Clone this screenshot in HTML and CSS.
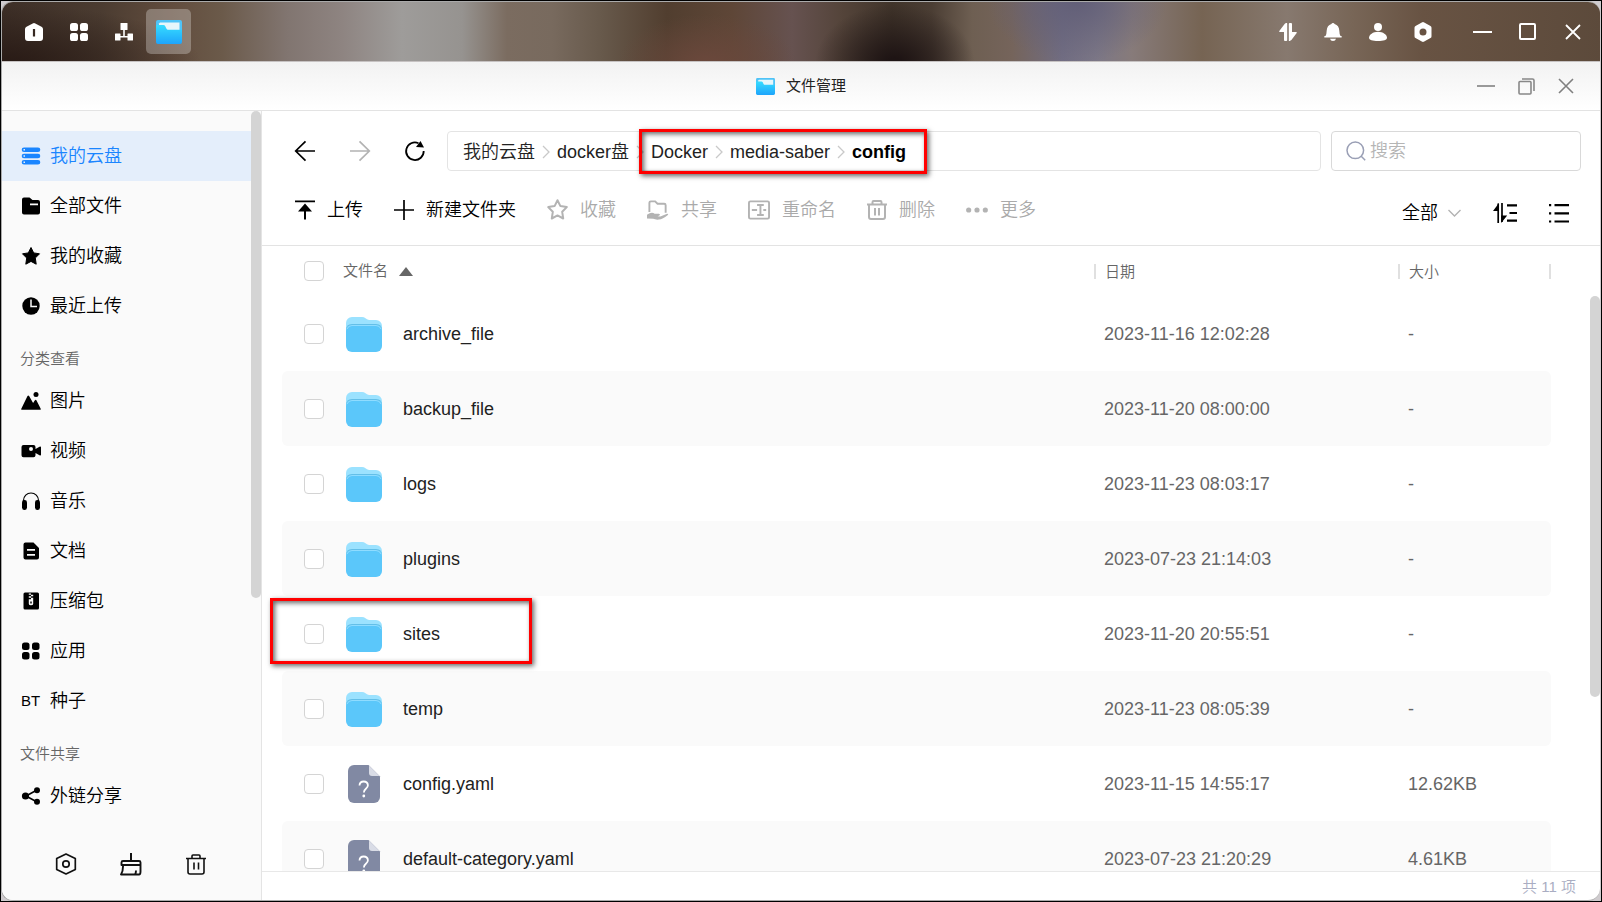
FILE: index.html
```html
<!DOCTYPE html>
<html lang="zh-CN">
<head>
<meta charset="utf-8">
<title>文件管理</title>
<link rel="stylesheet" href="styles.css">
</head>
<body>
<svg class="sprite" aria-hidden="true">
  <defs>
    <linearGradient id="g-app" x1="0" y1="0" x2="0" y2="1"><stop offset="0" stop-color="#36dcff"/><stop offset="1" stop-color="#1ea4fb"/></linearGradient>
  </defs>
  <symbol id="app-folder" viewBox="0 0 26 24">
    <path d="M2 0h22a2 2 0 0 1 2 2v14H0V2a2 2 0 0 1 2-2z" fill="#4fc3f7"/>
    <path d="M4 2.500h19.500V12H3V3.500z" fill="#e6f6fb"/>
    <path d="M0 6q0-1 1-1h6.500q1 0 1.500.8l1.500 3q.5.900 1.500.900h14V22a2 2 0 0 1-2 2H2a2 2 0 0 1-2-2z" fill="url(#g-app)"/>
  </symbol>
  <symbol id="folder" viewBox="0 0 36 35">
    <path d="M0 6a6 6 0 0 1 6-6h10q2 0 3.500 1.200L21 2.300q1 .7 2.500.7H30a6 6 0 0 1 6 6v8H0z" fill="#9be2ff"/>
    <path d="M0 13q0-6 6-6h24q6 0 6 6l-2-4H2z" fill="#63bfe8"/>
    <path d="M0 14a6 6 0 0 1 6-6h24a6 6 0 0 1 6 6v15a6 6 0 0 1-6 6H6a6 6 0 0 1-6-6z" fill="#5bc7fa"/>
    <path d="M1 12q1.500-3.500 5-3.500h24q3.500 0 5 3.500" fill="none" stroke="#8fdcff"/>
  </symbol>
  <symbol id="unknown" viewBox="0 0 32 38">
    <path d="M6 0h14.500L32 11.500V32a6 6 0 0 1-6 6H6a6 6 0 0 1-6-6V6a6 6 0 0 1 6-6z" fill="#8189a3"/>
    <path d="M21 .5L31.500 11H24a3 3 0 0 1-3-3z" fill="#d9dce6"/>
    <path d="M11.500 20.500q.2-4 4.200-4t4.200 3.800q0 1.900-2 3.500-2 1.600-2 3.700" fill="none" stroke="#fff" stroke-width="1.800"/><circle cx="15.800" cy="31" r="1.400" fill="#fff"/>
  </symbol>
  <symbol id="crumb-arrow" viewBox="0 0 8 14"><path d="M1 1l6 6-6 6" fill="none" stroke="#c9c9c9" stroke-width="1.300"/></symbol>
</svg>

<div class="window">
  <header class="taskbar">
    <nav class="task-group">
      <button class="task" aria-label="桌面"><svg width="18" height="18" viewBox="0 0 18 18"><path fill="#fff" fill-rule="evenodd" d="M9 0q.7 0 1.300.4l6.200 3.300Q18 4.600 18 6v9a3 3 0 0 1-3 3H3a3 3 0 0 1-3-3V6q0-1.400 1.500-2.300L7.700.4Q8.300 0 9 0zM7.900 6v7.500h2.200V6z"/></svg></button>
      <button class="task" aria-label="应用"><svg width="18" height="18" viewBox="0 0 18 18" fill="#fff"><rect width="8" height="8" rx="2.600"/><rect x="10" width="8" height="8" rx="2.600"/><rect y="10" width="8" height="8" rx="2.600"/><rect x="10" y="10" width="8" height="8" rx="2.600"/></svg></button>
      <button class="task" aria-label="网络"><svg width="18" height="18" viewBox="0 0 18 18" fill="#fff"><rect x="5.500" y="0" width="7" height="7" rx=".5"/><path d="M8.200 6h1.600v7H8.200zM4 13h10v1.500H4z"/><rect y="10.500" width="5.500" height="7" rx=".5"/><rect x="12.500" y="10.500" width="5.500" height="7" rx=".5"/></svg></button>
      <button class="task task-active" aria-label="文件管理"><svg width="26" height="24"><use href="#app-folder"/></svg></button>
    </nav>
    <div class="task-group">
      <button class="task" aria-label="传输"><svg width="18" height="18" viewBox="0 0 18 18" fill="#fff"><path d="M8.200.8V17a1 1 0 0 1-1 1H6a1 1 0 0 1-1-1V9H.8q-1 0-.5-.9L5.600.9Q8.200-1 8.200.8zM9.800 17.200V1a1 1 0 0 1 1-1H12a1 1 0 0 1 1 1v8h4.200q1 0 .5.900l-5.300 7.200q-2.600 1.900-2.600.1z"/></svg></button>
      <button class="task" aria-label="通知"><svg width="18" height="18" viewBox="0 0 18 18" fill="#fff"><path d="M9 0q1.200 0 1.600 1Q15 2.300 15.300 7.500q.2 4 1 5.300l1.300.5q.7 1-.3 1.200H.7q-1-.2-.3-1.200l1.300-.5q.8-1.300 1-5.300Q3 2.300 7.400 1 7.800 0 9 0zM6 15.700h6q-.5 2.300-3 2.300t-3-2.300z"/></svg></button>
      <button class="task" aria-label="用户"><svg width="18" height="18" viewBox="0 0 18 18" fill="#fff"><circle cx="9" cy="4" r="4"/><path d="M9 8.700c5 0 9 3 9 6 0 2.200-3.500 3.300-9 3.300s-9-1.100-9-3.300c0-3 4-6 9-6z"/></svg></button>
      <button class="task" aria-label="设置"><svg width="18" height="20" viewBox="0 0 18 20"><path fill="#fff" fill-rule="evenodd" d="M9 0q.6 0 1.200.4l6.300 3.500q1 .6 1 1.900v8.400q0 1.300-1 1.900l-6.300 3.500Q9 20.200 7.800 19.600l-6.300-3.500q-1-.6-1-1.900V5.800q0-1.300 1-1.900L7.800.4Q8.400 0 9 0zm0 6.500a3.500 3.500 0 1 0 0 7 3.500 3.500 0 0 0 0-7z"/></svg></button>
      <span class="task-space"></span>
      <button class="task" aria-label="最小化"><svg width="19" height="2"><path d="M0 1h19" stroke="#fff" stroke-width="2"/></svg></button>
      <button class="task" aria-label="最大化"><svg width="18" height="18"><rect x="1" y="1" width="15" height="15" rx="1" fill="none" stroke="#fff" stroke-width="2"/></svg></button>
      <button class="task" aria-label="关闭"><svg width="16" height="16"><path d="M1 1l14 14M15 1L1 15" stroke="#fff" stroke-width="1.800"/></svg></button>
    </div>
  </header>

  <div class="titlebar">
    <span></span>
    <h1 class="title"><svg width="19" height="17" viewBox="0 0 26 24" preserveAspectRatio="none"><use href="#app-folder"/></svg>文件管理</h1>
    <div class="title-controls">
      <button class="ctl" aria-label="最小化窗口"><svg width="18" height="2"><path d="M0 1h18" stroke="#999" stroke-width="2"/></svg></button>
      <button class="ctl" aria-label="还原窗口"><svg width="17" height="17" fill="none" stroke="#888" stroke-width="1.600"><rect x="1" y="3.500" width="12" height="12.500" rx="1"/><path d="M4 1h10.500q1.500 0 1.500 1.500V13"/></svg></button>
      <button class="ctl" aria-label="关闭窗口"><svg width="16" height="16"><path d="M1 1l14 14M15 1L1 15" stroke="#808080" stroke-width="1.600"/></svg></button>
    </div>
  </div>

  <div class="body">
    <aside class="sidebar">
      <nav class="side-nav">
        <a class="side-item side-active" href="#"><svg width="20" height="20" viewBox="0 0 20 20"><path fill="#1a85ff" fill-rule="evenodd" d="M3 1.500h14a2.200 2.200 0 0 1 0 4.600H3a2.200 2.200 0 0 1 0-4.600zM2.500 3v1.500H4V3zM3 7.700h14a2.200 2.200 0 0 1 0 4.600H3a2.200 2.200 0 0 1 0-4.600zm-.5 1.500v1.500H4V9.200zM3 13.900h14a2.200 2.200 0 0 1 0 4.600H3a2.200 2.200 0 0 1 0-4.600zm-.5 1.500v1.500H4v-1.500z"/></svg>我的云盘</a>
        <a class="side-item" href="#"><svg width="20" height="20" viewBox="0 0 20 20"><path fill-rule="evenodd" d="M3 1.500h5.500L11.500 4H17q2 0 2 2v10.500q0 2-2 2H3q-2 0-2-2v-13q0-2 2-2zM9 7.500v1.700h8V7.500z"/></svg>全部文件</a>
        <a class="side-item" href="#"><svg width="20" height="20" viewBox="0 0 20 20"><path stroke="#000" stroke-linejoin="round" d="M10 1.500l2.700 5.400 5.800.9-4.200 4.200.9 6.200-5.200-2.800-5.200 2.800.9-6.200L1.500 7.800l5.800-.9z"/></svg>我的收藏</a>
        <a class="side-item" href="#"><svg width="20" height="20" viewBox="0 0 20 20"><circle cx="10" cy="10" r="8.700"/><path d="M10 3.500V10.500h6" fill="none" stroke="#fafafa" stroke-width="1.500"/></svg>最近上传</a>
        <h2 class="side-label">分类查看</h2>
        <a class="side-item" href="#"><svg width="20" height="20" viewBox="0 0 20 20"><circle cx="15" cy="3.500" r="2.500"/><path d="M.8 18.800Q0 18.800.3 17.800L6.500 5q.8-1 1.600 0l4 7 1.800-2.800q.8-1 1.500 0l4.200 8.300q.5 1.300-.5 1.300z"/></svg>图片</a>
        <a class="side-item" href="#"><svg width="20" height="20" viewBox="0 0 20 20"><path fill-rule="evenodd" d="M2.500 4h10q2 0 2 2v2l4-2.300q1.500-.5 1.500.5v7.600q0 1-1.500.5l-4-2.300v2.300q0 2-2 2h-10q-2 0-2-2V6q0-2 2-2zM10 6a2 2 0 1 0 0 4 2 2 0 0 0 0-4z"/></svg>视频</a>
        <a class="side-item" href="#"><svg width="20" height="20" viewBox="0 0 20 20"><path d="M2.500 11V9.500a7.500 7.500 0 0 1 15 0V11" fill="none" stroke="#000" stroke-width="1.200"/><rect x="1" y="9" width="5" height="10" rx="2.400"/><rect x="14" y="9" width="5" height="10" rx="2.400"/></svg>音乐</a>
        <a class="side-item" href="#"><svg width="20" height="20" viewBox="0 0 20 20"><path fill-rule="evenodd" d="M4.500 1.500h8L18 7v9.500q0 2-2 2H4.500q-2 0-2-2v-13q0-2 2-2zM6 8v1.700h8V8zm0 5v1.700h8V13z"/></svg>文档</a>
        <a class="side-item" href="#"><svg width="20" height="20" viewBox="0 0 20 20"><path fill-rule="evenodd" d="M4 1.500h12.500q1.500 0 1.500 1.500v14q0 1.500-1.500 1.500H4q-1.500 0-1.500-1.500V3Q2.500 1.500 4 1.500zM7.800 2.500v1.200h2.200V2.500zM10 3.700v1.500h2.200V3.700zM7.800 5.200v1.500H10V5.200zM10 6.700v1.500H7.800v4.500q0 1.500 2.200 1.500t2.200-1.500V6.700zM9.300 10.500h1.400v2H9.300z"/></svg>压缩包</a>
        <a class="side-item" href="#"><svg width="20" height="20" viewBox="0 0 20 20"><rect x="1" y="1.500" width="7.500" height="7.500" rx="2.500"/><rect x="11" y="1.500" width="7.500" height="7.500" rx="2.500"/><rect x="1" y="11" width="7.500" height="7.500" rx="2.500"/><rect x="11" y="11" width="7.500" height="7.500" rx="2.500"/></svg>应用</a>
        <a class="side-item" href="#"><span class="side-bt">BT</span>种子</a>
        <h2 class="side-label">文件共享</h2>
        <a class="side-item" href="#"><svg width="20" height="20" viewBox="0 0 20 20"><path d="M16 4L5 10l11 6" fill="none" stroke="#000" stroke-width="1.600"/><circle cx="4.500" cy="10" r="3.600"/><circle cx="16" cy="4.300" r="3"/><circle cx="16" cy="15.700" r="3"/></svg>外链分享</a>
      </nav>
      <div class="side-tools">
        <button class="side-tool" aria-label="设置"><svg width="22" height="22" viewBox="0 0 22 22" fill="none" stroke="#111" stroke-width="1.700" stroke-linejoin="round"><path d="M11 1l9.300 4.500v11L11 21l-9.300-4.500v-11z"/><circle cx="11" cy="11" r="3.200"/></svg></button>
        <button class="side-tool" aria-label="清理"><svg width="22" height="24" viewBox="0 0 22 24" fill="none" stroke="#111" stroke-width="1.900" stroke-linejoin="round"><path d="M11 1v8" stroke-width="2"/><path d="M1.500 13V10.500q0-1.500 1.500-1.500h16q1.500 0 1.500 1.500V13zM3 13q.3 6-2 9.500h18q1.500 0 1.500-3V13M15 22.500q1-1.500 1-4"/></svg></button>
        <button class="side-tool" aria-label="回收站"><svg width="20" height="21" viewBox="0 0 20 21" fill="none" stroke="#111" stroke-width="1.600"><path d="M0 4.500h20M6 4V2q0-1 1-1h6q1 0 1 1v2M2 5v13q0 2 2 2h12q2 0 2-2V5M8 8.500v7M12.500 8.500v7"/></svg></button>
      </div>
      <span class="scroll scroll-side"></span>
    </aside>

    <main class="main">
      <div class="navrow">
        <button class="nav-btn" aria-label="后退"><svg width="22" height="22" viewBox="0 0 22 22" fill="none" stroke="#000" stroke-width="1.700"><path d="M21 11H2M11.500 1.300L1.700 11l9.800 9.700"/></svg></button>
        <button class="nav-btn" aria-label="前进"><svg width="22" height="22" viewBox="0 0 22 22" fill="none" stroke="#b3b3b3" stroke-width="1.700"><path d="M1 11h19M10.500 1.300l9.800 9.700-9.800 9.700"/></svg></button>
        <button class="nav-btn" aria-label="刷新"><svg width="22" height="22" viewBox="0 0 22 22"><path d="M14.500 3.200A8.800 8.800 0 1 0 19.700 11" fill="none" stroke="#000" stroke-width="1.800"/><path d="M16.500 1l3.500 6.500-8-.5z"/></svg></button>
        <nav class="crumbs">
          <a href="#">我的云盘</a><svg class="crumb-sep"><use href="#crumb-arrow"/></svg><a href="#">docker盘</a><svg class="crumb-sep"><use href="#crumb-arrow"/></svg><span class="crumb-marked"><a href="#">Docker</a><svg class="crumb-sep"><use href="#crumb-arrow"/></svg><a href="#">media-saber</a><svg class="crumb-sep"><use href="#crumb-arrow"/></svg><a class="crumb-now" href="#">config</a><span class="mark mark-crumb"></span></span>
        </nav>
        <label class="search"><svg width="20" height="20" viewBox="0 0 20 20" fill="none" stroke="#9a9fb5" stroke-width="1.500"><circle cx="9.300" cy="9.300" r="8.300"/><path d="M15 15l4.200 4.200"/></svg><input class="search-input" type="text" placeholder="搜索" aria-label="搜索"></label>
      </div>

      <div class="toolbar">
        <button class="tool"><svg width="20" height="20" viewBox="0 0 20 20"><path d="M0 1.300h20" stroke="#000" stroke-width="1.800"/><path d="M10 3.500l7 8h-6v8H9v-8H3z"/></svg>上传</button>
        <button class="tool"><svg width="20" height="20" viewBox="0 0 20 20"><path d="M0 10h20M10 0v20" stroke="#000" stroke-width="1.700"/></svg>新建文件夹</button>
        <button class="tool" disabled><svg width="21" height="21" viewBox="0 0 21 21" fill="none" stroke="#b3b3b3" stroke-width="2" stroke-linejoin="round"><path d="M10.500 1.200l2.900 5.900 6.400 1-4.600 4.700 1 6.700-5.700-3.100-5.700 3.100 1-6.700L1.200 8.100l6.400-1z"/></svg>收藏</button>
        <button class="tool" disabled><svg width="22" height="20" viewBox="0 0 23 20" fill="none" stroke="#b3b3b3" stroke-width="2"><path d="M2.500 12V2.500q0-1.500 1.500-1.500h4.500L11 3.500h7q1.500 0 1.500 1.500v8"/><path d="M0 15q5-3.500 8-1h4.500q2 .5.500 1.800l-2 .7 3 .2 7-2.700q2 0 .5 1.500-5 4.200-9 4.500-4 .3-6-.8L0 19z" fill="#b3b3b3" stroke="none"/></svg>共享</button>
        <button class="tool" disabled><svg width="22" height="20" viewBox="0 0 23 20" fill="none" stroke="#b3b3b3" stroke-width="2"><rect x="1" y="1" width="21" height="18" rx="1.500"/><path d="M4 10h5.500M9.500 4.800h7M9.500 15.200h7M13 5v10M16 10h3"/></svg>重命名</button>
        <button class="tool" disabled><svg width="20" height="20" viewBox="0 0 20 20" fill="none" stroke="#b3b3b3" stroke-width="2"><path d="M0 4.500h20M5.500 4V2.300q0-1.300 1-1.300h7q1 0 1 1.300V4M2 5v12q0 2 2 2h12q2 0 2-2V5M8 8v7.500M12 8v7.500"/></svg>删除</button>
        <button class="tool" disabled><svg width="22" height="20" viewBox="0 0 23 20" fill="#b3b3b3"><circle cx="2.800" cy="10" r="2.700"/><circle cx="11.500" cy="10" r="2.700"/><circle cx="20.200" cy="10" r="2.700"/></svg>更多</button>
        <div class="view-tools">
          <label class="filter"><select class="filter-select" aria-label="筛选"><option>全部</option></select><svg width="13" height="8" viewBox="0 0 13 8"><path d="M.5 1l6 6 6-6" fill="none" stroke="#b3b3b3" stroke-width="1.400"/></svg></label>
          <button class="view-btn" aria-label="排序"><svg width="24" height="20" viewBox="0 0 24 20"><path d="M5.200.5V20M9 0v19" stroke="#000" stroke-width="1.700"/><path d="M6 0v8H0zM8.200 20v-7.500h6zM14 1.200h10v2.200H14zM16.500 8.900H24v2.200h-7.500zM14 16.600h10v2.200H14z"/></svg></button>
          <button class="view-btn" aria-label="列表视图"><svg width="20" height="20" viewBox="0 0 20 20"><path d="M5.500 1H20v2.200H5.500zM5.500 9.200H20v2.200H5.500zM5.500 17.400H20v2.200H5.500zM0 1h2.200v2.200H0zM0 9.200h2.200v2.200H0zM0 17.400h2.200v2.200H0z"/></svg></button>
        </div>
      </div>

      <div class="list">
        <table class="files">
          <colgroup><col class="c-check"><col class="c-icon"><col><col class="c-date"><col class="c-size"></colgroup>
          <thead>
            <tr><th><input class="check" type="checkbox" aria-label="全选"></th><th colspan="2" class="th-name">文件名<svg width="14" height="9" viewBox="0 0 14 9"><path d="M7 0l7 9H0z" fill="#666"/></svg></th><th class="th-date"><span>日期</span></th><th class="th-size"><span>大小</span></th></tr>
          </thead>
          <tbody>
            <tr><td><input class="check" type="checkbox" aria-label="archive_file"></td><td><svg class="ico"><use href="#folder"/></svg></td><td class="name">archive_file</td><td>2023-11-16 12:02:28</td><td>-</td></tr>
            <tr><td><input class="check" type="checkbox" aria-label="backup_file"></td><td><svg class="ico"><use href="#folder"/></svg></td><td class="name">backup_file</td><td>2023-11-20 08:00:00</td><td>-</td></tr>
            <tr><td><input class="check" type="checkbox" aria-label="logs"></td><td><svg class="ico"><use href="#folder"/></svg></td><td class="name">logs</td><td>2023-11-23 08:03:17</td><td>-</td></tr>
            <tr><td><input class="check" type="checkbox" aria-label="plugins"></td><td><svg class="ico"><use href="#folder"/></svg></td><td class="name">plugins</td><td>2023-07-23 21:14:03</td><td>-</td></tr>
            <tr><td class="marked"><input class="check" type="checkbox" aria-label="sites"><span class="mark mark-row"></span></td><td><svg class="ico"><use href="#folder"/></svg></td><td class="name">sites</td><td>2023-11-20 20:55:51</td><td>-</td></tr>
            <tr><td><input class="check" type="checkbox" aria-label="temp"></td><td><svg class="ico"><use href="#folder"/></svg></td><td class="name">temp</td><td>2023-11-23 08:05:39</td><td>-</td></tr>
            <tr><td><input class="check" type="checkbox" aria-label="config.yaml"></td><td><svg class="ico ico-file"><use href="#unknown"/></svg></td><td class="name">config.yaml</td><td>2023-11-15 14:55:17</td><td>12.62KB</td></tr>
            <tr><td><input class="check" type="checkbox" aria-label="default-category.yaml"></td><td><svg class="ico ico-file"><use href="#unknown"/></svg></td><td class="name">default-category.yaml</td><td>2023-07-23 21:20:29</td><td>4.61KB</td></tr>
          </tbody>
        </table>
        <span class="scroll scroll-list"></span>
      </div>
      <footer class="status">共 11 项</footer>
    </main>
  </div>
</div>
</body>
</html>
```
FILE: styles.css
```css
* { box-sizing: border-box; }

body {
  margin: 0;
  height: 100vh;
  padding: 0 1px 0 0;
  overflow: hidden;
  border: 1px solid #000;
  background: #cfcbce;
  color: #111;
  font: 350 18px/24px "Liberation Sans", "Noto Sans CJK SC", sans-serif;
}

button, input, select { font: inherit; color: inherit; }
button { padding: 0; border: 0; background: none; display: flex; align-items: center; justify-content: center; }
a { color: inherit; text-decoration: none; }
h1, h2 { margin: 0; font-weight: inherit; }
svg { display: block; flex: none; }
.sprite { position: absolute; width: 0; height: 0; }

.window {
  height: 100%;
  display: flex;
  flex-direction: column;
  overflow: hidden;
  border: 1px solid #aaa;
  border-right-width: 0;
  border-radius: 12px;
  background: #fff;
}

/* Taskbar */
.taskbar {
  flex: none;
  height: 59px;
  display: flex;
  justify-content: space-between;
  align-items: center;
  padding: 0 5px 0 9px;
  background:
    radial-gradient(ellipse 80px 60px at 893px 62px, #1e1414 10%, #1e141400),
    radial-gradient(ellipse 90px 50px at 705px 62px, #6b483c, #6b483c00),
    radial-gradient(ellipse 200px 60px at 0 62px, #281a15, #281a1500),
    radial-gradient(ellipse 90px 60px at 1075px 0, #625f78, #625f7800),
    linear-gradient(90deg, #3d2f27 0, #4b3c31 100px, #624d3e 170px, #6b5a4a 220px, #817570 285px, #8e8481 340px, #9e9c9a 400px, #969390 460px, #7b6c60 505px, #786a5e 550px, #67594b 600px, #513e2f 665px, #5e4637 730px, #665250 790px, #54443a 840px, #40342a 890px, #4b3e34 930px, #6e5f52 970px, #75645b 1010px, #716d82 1060px, #7c7786 1095px, #877b7a 1130px, #766453 1200px, #87796f 1285px, #786657 1350px, #685343 1420px, #5c4a3b 1600px);
}
.task-group { display: flex; align-items: center; }
.task { width: 45px; height: 45px; border-radius: 5px; }
.task-active { background: rgba(255, 255, 255, .28); }
.task-space { width: 15px; }

/* Window title */
.titlebar {
  flex: none;
  height: 50px;
  display: grid;
  grid-template-columns: 1fr auto 1fr;
  align-items: center;
  padding: 0 14px;
  border-top: 1px solid #c6c2c2;
  border-bottom: 1px solid #e3e3e3;
  background: linear-gradient(#f2f2f2, #fff);
}
.title { display: flex; align-items: center; gap: 11px; font-size: 15px; font-weight: 400; color: #222; }
.title-controls { display: flex; justify-content: flex-end; }
.ctl { width: 40px; height: 40px; }

.body { flex: 1; min-height: 0; display: flex; }

/* Sidebar */
.sidebar {
  position: relative;
  flex: none;
  width: 260px;
  display: flex;
  flex-direction: column;
  border-right: 1px solid #e4e4e4;
  background: #fafafa;
}
.side-nav { flex: 1; min-height: 0; padding-top: 20px; overflow: hidden; }
.side-item { display: flex; align-items: center; gap: 9px; height: 50px; padding-left: 19px; color: #000; }
.side-active { background: #e4eefb; color: #1a85ff; }
.side-label { height: 45px; padding: 5px 0 0 18px; font-size: 15px; line-height: 45px; color: #666; }
.side-bt { width: 20px; font-size: 15px; }
.side-tools { flex: none; display: flex; height: 74px; padding: 2px 0 0 31px; align-items: center; }
.side-tool { width: 65px; height: 40px; }
.scroll { position: absolute; width: 10px; border-radius: 5px; background: #d4d4d4; }
.scroll-side { top: 0; right: 0; height: 487px; }

/* Main column */
.main { flex: 1; min-width: 0; display: flex; flex-direction: column; }
.navrow { flex: none; display: flex; align-items: center; padding: 20px 19px 0 15px; }
.nav-btn { width: 55px; height: 40px; }
.crumbs {
  flex: 1;
  display: flex;
  align-items: center;
  height: 40px;
  margin: 0 10px 0 5px;
  padding: 1px 0 0 15px;
  border: 1px solid #e4e4e4;
  border-radius: 4px;
  color: #222;
}
.crumb-sep { width: 8px; height: 14px; margin: 0 7px; }
.crumb-marked { position: relative; display: flex; align-items: center; }
.crumb-now { font-weight: 700; color: #000; }
.mark {
  position: absolute;
  border: 3px solid #f00;
  box-shadow: 2px 2px 5px rgba(0, 0, 0, .6), inset 2px 2px 5px rgba(0, 0, 0, .6);
  pointer-events: none;
}
.mark-crumb { inset: -11px -21px -10px -12px; }
.search {
  flex: none;
  display: flex;
  align-items: center;
  gap: 4px;
  width: 250px;
  height: 40px;
  padding: 0 14px;
  border: 1px solid #d9d9d9;
  border-radius: 4px;
}
.search-input { width: 100%; min-width: 0; padding: 0; border: 0; outline: 0; background: none; }
.search-input::placeholder { color: #b5b5b5; opacity: 1; }

.toolbar {
  flex: none;
  display: flex;
  align-items: center;
  gap: 31px;
  height: 75px;
  padding: 3px 31px 0 33px;
  border-bottom: 1px solid #e3e3e3;
}
.tool { gap: 12px; color: #000; }
.tool:disabled { color: #aaa; }
.view-tools { display: flex; align-items: center; gap: 32px; margin-left: auto; padding-top: 6px; }
.filter { display: flex; align-items: center; gap: 10px; }
.filter-select { appearance: none; width: 36px; padding: 0; border: 0; background: none; color: #000; }

/* File list */
.list { position: relative; flex: 1; min-height: 0; padding: 0 49px 0 20px; overflow: hidden; }
.files { width: 100%; border-collapse: separate; border-spacing: 0; table-layout: fixed; }
.c-check { width: 61px; }
.c-icon { width: 60px; }
.c-date { width: 304px; }
.c-size { width: 143px; }
.files th { height: 50px; padding: 0; font-size: 15px; font-weight: inherit; text-align: left; color: #666; }
.files td { height: 75px; padding: 0; color: #666; }
.files td:nth-child(2) { padding: 1px 0 0 3px; }
.files .name { color: #222; }
.files tbody tr:nth-child(even) td { background: #fafafa; }
.files tbody td:first-child { border-radius: 6px 0 0 6px; }
.files tbody td:last-child { border-radius: 0 6px 6px 0; }
.files .th-name svg { display: inline-block; margin-left: 11px; }
.th-date span, .th-size span { display: block; margin-left: -10px; padding-left: 9px; border-left: 2px solid #e0e0e0; line-height: 15px; }
.th-size span { border-right: 2px solid #e0e0e0; }
.check {
  appearance: none;
  display: block;
  width: 20px;
  height: 20px;
  margin: 0 0 0 22px;
  border: 1px solid #d4d4d4;
  border-radius: 4px;
  background: #fff;
}
.ico { width: 36px; height: 35px; }
.ico-file { height: 38px; }
.marked { position: relative; }
.mark-row { top: 2px; left: -12px; width: 262px; height: 66px; }
.scroll-list { top: 50px; right: 0; height: 401px; }

.status {
  flex: none;
  height: 29px;
  padding-right: 24px;
  border-top: 1px solid #e8e8e8;
  font-size: 15px;
  line-height: 29px;
  text-align: right;
  color: #a9adc2;
}
```
